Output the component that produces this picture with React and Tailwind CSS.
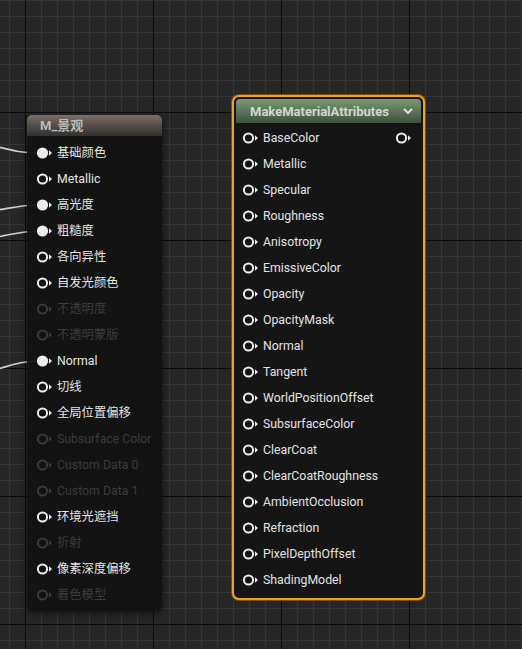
import React from 'react';

const FONT = "font-['Roboto','Noto_Sans_CJK_SC',sans-serif]";

// pin glyph: ring (or dot) + little arrow
const Pin = ({ state = 'empty' }) => {
  const dim = state === 'off';
  const color = dim ? '#3a3a3a' : '#ececec';
  return (
    <svg width="18" height="14" viewBox="0 0 18 14" className="shrink-0">
      {state === 'full' ? (
        <circle cx="6.5" cy="7" r="5.6" fill={color} />
      ) : (
        <circle cx="6.5" cy="7" r="4.6" fill="none" stroke={color} strokeWidth="2" />
      )}
      <path d="M13 4.2 L16 7 L13 9.8 Z" fill={color} />
    </svg>
  );
};

const leftPins = [
  ['基础颜色', 'full'],
  ['Metallic', 'empty'],
  ['高光度', 'full'],
  ['粗糙度', 'full'],
  ['各向异性', 'empty'],
  ['自发光颜色', 'empty'],
  ['不透明度', 'off'],
  ['不透明蒙版', 'off'],
  ['Normal', 'full'],
  ['切线', 'empty'],
  ['全局位置偏移', 'empty'],
  ['Subsurface Color', 'off'],
  ['Custom Data 0', 'off'],
  ['Custom Data 1', 'off'],
  ['环境光遮挡', 'empty'],
  ['折射', 'off'],
  ['像素深度偏移', 'empty'],
  ['着色模型', 'off'],
];

const rightPins = [
  'BaseColor',
  'Metallic',
  'Specular',
  'Roughness',
  'Anisotropy',
  'EmissiveColor',
  'Opacity',
  'OpacityMask',
  'Normal',
  'Tangent',
  'WorldPositionOffset',
  'SubsurfaceColor',
  'ClearCoat',
  'ClearCoatRoughness',
  'AmbientOcclusion',
  'Refraction',
  'PixelDepthOffset',
  'ShadingModel',
];

const PinRow = ({ label, state }) => (
  <div className="flex h-[26px] items-center gap-[3px]">
    <Pin state={state} />
    <span
      className={`text-[12.3px] leading-none ${
        state === 'off' ? 'text-[#3c3c3c]' : 'text-[#e4e4e4]'
      }`}
    >
      {label}
    </span>
  </div>
);

export default function App() {
  return (
    <div
      className={`relative h-[649px] w-[522px] overflow-hidden bg-[#262626] ${FONT} bg-[image:linear-gradient(#0c0c0c_1px,transparent_1px),linear-gradient(90deg,#0c0c0c_1px,transparent_1px),linear-gradient(#353535_1px,transparent_1px),linear-gradient(90deg,#353535_1px,transparent_1px)] bg-[length:128px_128px,128px_128px,16px_16px,16px_16px] bg-[position:25px_112px,25px_112px,9px_0px,9px_0px]`}
    >
      {/* wires */}
      <svg className="absolute inset-0" width="522" height="649">
        <g fill="none" stroke="#cfcfcf" strokeWidth="1.6">
          <path d="M-10 145 C8 149 18 153 40 153" />
          <path d="M-10 211 C8 209 18 205 40 205" />
          <path d="M-10 238 C8 236 18 231 40 231" />
          <path d="M-10 371 C8 367 18 361 40 361" />
        </g>
      </svg>

      {/* material output node */}
      <div className="absolute left-[27px] top-[115px] w-[135px] overflow-hidden rounded-[5px] bg-[#121212]/95 shadow-[0_2px_6px_rgba(0,0,0,0.6)]">
        <div className="flex h-[21px] items-center bg-[linear-gradient(180deg,#7b7166_0%,#55504a_45%,#33302d_100%)] px-[13px]">
          <span className="text-[13px] font-bold leading-none text-[#b9b9b9]">M_景观</span>
        </div>
        <div className="flex flex-col pb-[3px] pl-[9px] pt-[4px]">
          {leftPins.map(([label, state]) => (
            <PinRow key={label} label={label} state={state} />
          ))}
        </div>
      </div>

      {/* MakeMaterialAttributes node */}
      <div className="absolute left-[232px] top-[95px] w-[193px] rounded-[7px] border-2 border-[#eba425] bg-[#151515] p-[2px] shadow-[0_0_0_1px_#7a4d0c]">
        <div className="flex h-[24px] items-center justify-between rounded-t-[4px] bg-[linear-gradient(180deg,#7a9675_0%,#5c7758_50%,#3d523c_100%)] pl-[14px] pr-[7px]">
          <span className="text-[13px] font-bold leading-none text-[#cfd8ce]">MakeMaterialAttributes</span>
          <svg width="12" height="10" viewBox="0 0 12 10">
            <path d="M2 3 L6 7 L10 3" fill="none" stroke="#e6e6e6" strokeWidth="1.8" />
          </svg>
        </div>
        <div className="relative flex flex-col pb-[3px] pl-[6px] pt-[2px]">
          {rightPins.map((label) => (
            <PinRow key={label} label={label} state="empty" />
          ))}
          <div className="absolute right-[8px] top-[2px] flex h-[26px] items-center">
            <Pin state="empty" />
          </div>
        </div>
      </div>
    </div>
  );
}
